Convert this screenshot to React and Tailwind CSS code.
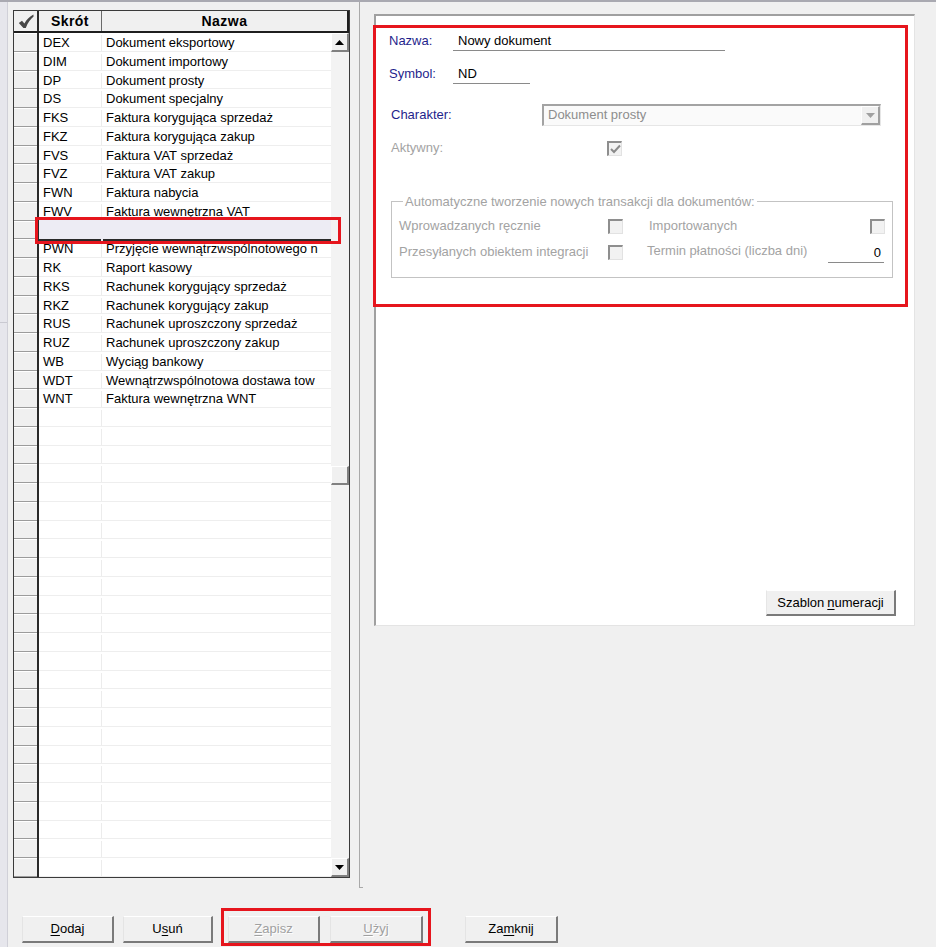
import React from "react";

const docs = [
  ["DEX", "Dokument eksportowy"],
  ["DIM", "Dokument importowy"],
  ["DP", "Dokument prosty"],
  ["DS", "Dokument specjalny"],
  ["FKS", "Faktura korygująca sprzedaż"],
  ["FKZ", "Faktura korygująca zakup"],
  ["FVS", "Faktura VAT sprzedaż"],
  ["FVZ", "Faktura VAT zakup"],
  ["FWN", "Faktura nabycia"],
  ["FWV", "Faktura wewnętrzna VAT"],
  null,
  ["PWN", "Przyjęcie wewnątrzwspólnotowego n"],
  ["RK", "Raport kasowy"],
  ["RKS", "Rachunek korygujący sprzedaż"],
  ["RKZ", "Rachunek korygujący zakup"],
  ["RUS", "Rachunek uproszczony sprzedaż"],
  ["RUZ", "Rachunek uproszczony zakup"],
  ["WB", "Wyciąg bankowy"],
  ["WDT", "Wewnątrzwspólnotowa dostawa tow"],
  ["WNT", "Faktura wewnętrzna WNT"],
];

const TOTAL_ROWS = 45;
const rows = [...docs, ...Array(TOTAL_ROWS - docs.length).fill(undefined)];

function HeaderCheck() {
  return (
    <svg width="16" height="15" viewBox="0 0 16 15">
      <path
        d="M0.8 9 L4 6.8 L6.4 9.6 C8.8 5.4 11.6 2.6 15.4 0.6 L15.6 2.6 C12.4 5.2 9.8 8.8 7.8 14 L5.4 14 Z"
        fill="#474747"
      />
    </svg>
  );
}

function Arrow({ up, color = "#000" }) {
  return (
    <svg width="9" height="5" viewBox="0 0 9 5">
      {up ? (
        <path d="M0 5 L4.5 0 L9 5 Z" fill={color} />
      ) : (
        <path d="M0 0 L9 0 L4.5 5 Z" fill={color} />
      )}
    </svg>
  );
}

function ScrollButton({ up }) {
  return (
    <div className="h-[19px] w-[18px] bg-[#f0f0f0] border-t border-l border-t-white border-l-white border-b-2 border-r-2 border-b-[#808080] border-r-[#808080] flex items-center justify-center">
      <Arrow up={up} />
    </div>
  );
}

function Grid() {
  return (
    <div className="ml-[5px] mt-[8px] w-[337px] h-[868px] border border-[#3a3a3a] flex flex-col bg-white">
      {/* column headers */}
      <div className="flex h-[22px] shrink-0 bg-[#f0f0f0] border-b-2 border-[#1e1e1e]">
        <div className="w-[25px] border-r-2 border-[#2a2a2a] flex items-center justify-center">
          <HeaderCheck />
        </div>
        <div className="w-[63px] border-r border-[#6a6a6a] flex items-center justify-center font-bold text-[14px] tracking-[0.4px]">
          Skrót
        </div>
        <div className="flex-1 border-r-2 border-[#1e1e1e] flex items-center justify-center font-bold text-[14px] tracking-[0.5px]">
          Nazwa
        </div>
      </div>

      {/* body */}
      <div className="flex flex-1 overflow-hidden">
        <div className="w-[25px] shrink-0 border-r-2 border-[#2a2a2a] flex flex-col">
          {rows.map((_, i) => (
            <div
              key={i}
              className="h-[18.75px] shrink-0 bg-[#f0f0f0] border-t border-white border-b border-b-[#9c9c9c]"
            />
          ))}
        </div>
        <div className="flex-1 flex flex-col">
          {rows.map((r, i) =>
            r === null ? (
              <div key={i} className="relative h-[18.75px] shrink-0">
                <div className="absolute left-0 right-0 top-[-3.5px] h-[24px] z-10 flex bg-[#edecf4]">
                  <div className="w-[62px] border-b-2 border-[#2a2a2a]" />
                  <div className="w-[1px]" />
                  <div className="flex-1 ml-[1px] border-b-2 border-[#2a2a2a]" />
                </div>
              </div>
            ) : (
              <div
                key={i}
                className="flex h-[18.75px] shrink-0 border-b border-[#eeeeee] pt-[2px] leading-[16px] overflow-hidden"
              >
                <div className="w-[63px] pl-[4px] border-r border-[#ececec] whitespace-nowrap overflow-hidden">
                  {r ? r[0] : ""}
                </div>
                <div className="flex-1 pl-[4px] whitespace-nowrap overflow-hidden">
                  {r ? r[1] : ""}
                </div>
              </div>
            )
          )}
        </div>
        {/* vertical scrollbar */}
        <div className="w-[18px] shrink-0 bg-[#f3f3f3] flex flex-col">
          <ScrollButton up />
          <div className="h-[414px]" />
          <div className="h-[19px] w-[18px] bg-[#f0f0f0] border-t border-l border-t-white border-l-white border-b-2 border-r-2 border-b-[#808080] border-r-[#808080]" />
          <div className="flex-1" />
          <ScrollButton />
        </div>
      </div>
    </div>
  );
}

function CheckBox({ checked }) {
  return (
    <div className="w-[15px] h-[15px] shrink-0 bg-[#f2f2f2] border-t-2 border-l-2 border-t-[#8e8e8e] border-l-[#8e8e8e] border-b border-r border-b-[#e2e2e2] border-r-[#e2e2e2] flex items-center justify-center">
      {checked && (
        <svg width="11" height="10" viewBox="0 0 11 10">
          <path d="M1 5 L4 8 L10 1.5" fill="none" stroke="#8a8a8a" strokeWidth="2" />
        </svg>
      )}
    </div>
  );
}

function Panel() {
  return (
    <div className="ml-[11px] mt-[12px] w-[541px] h-[612px] bg-white border-t-2 border-l-2 border-t-[#a0a0a0] border-l-[#a0a0a0] border-r border-b border-r-[#e4e4e4] border-b-[#e4e4e4] flex flex-col">
      <div className="pl-[13px] pt-[15px] flex flex-col">
        {/* Nazwa */}
        <div className="flex h-[20px] items-center">
          <div className="w-[64px] text-[#1f1f8c]">Nazwa:</div>
          <div className="w-[272px] h-[19px] pl-[5px] border-b border-[#8a8a8a] leading-[17px]">
            Nowy dokument
          </div>
        </div>
        {/* Symbol */}
        <div className="flex h-[20px] items-center mt-[13px]">
          <div className="w-[64px] text-[#1f1f8c]">Symbol:</div>
          <div className="w-[77px] h-[19px] pl-[5px] border-b border-[#8a8a8a] leading-[17px]">ND</div>
        </div>
        {/* Charakter */}
        <div className="flex h-[22px] items-center mt-[20px] pl-[2px]">
          <div className="w-[151px] text-[#1f1f8c]">Charakter:</div>
          <div className="w-[339px] h-[22px] flex bg-[#fafafa] border-t-2 border-l-2 border-t-[#a3a3a3] border-l-[#a3a3a3] border-b border-r border-b-[#e6e6e6] border-r-[#e6e6e6]">
            <div className="flex-1 pl-[4px] leading-[18px] text-[#8d8d8d]">Dokument prosty</div>
            <div className="w-[19px] h-[19px] bg-[#f0f0f0] border-t border-l border-t-white border-l-white border-b-2 border-r-2 border-b-[#a0a0a0] border-r-[#a0a0a0] flex items-center justify-center">
              <Arrow color="#a0a0a0" />
            </div>
          </div>
        </div>
        {/* Aktywny */}
        <div className="flex h-[20px] items-center mt-[12px] pl-[2px]">
          <div className="w-[216px] text-[#a3a3a3]">Aktywny:</div>
          <CheckBox checked />
        </div>
        {/* group */}
        <fieldset className="mt-[36px] ml-[2px] w-[502px] border border-[#c3c3c3] pl-[7px] pb-[16px]">
          <legend className="ml-[4px] px-[2px] text-[#a3a3a3] leading-[15px]">
            Automatyczne tworzenie nowych transakcji dla dokumentów:
          </legend>
          <div className="flex h-[18px] items-center mt-[8px] text-[#a3a3a3]">
            <div className="w-[209px]">Wprowadzanych ręcznie</div>
            <CheckBox />
            <div className="ml-[26px] w-[221px]">Importowanych</div>
            <CheckBox />
          </div>
          <div className="flex h-[18px] items-center mt-[8px] text-[#a3a3a3]">
            <div className="w-[209px]">Przesyłanych obiektem integracji</div>
            <CheckBox />
            <div className="ml-[24px] w-[181px] -mt-[3px]">Termin płatności (liczba dni)</div>
            <div className="w-[56px] h-[19px] mt-[2px] border-b border-[#8a8a8a] text-right pr-[3px] text-black leading-[17px]">
              0
            </div>
          </div>
        </fieldset>
      </div>
      <div className="mt-auto pb-[9px] pr-[18px] flex justify-end">
        <div className="w-[130px] h-[26px] bg-[#f0f0f0] border-t border-l border-t-white border-l-[#e6e6e6] border-b-2 border-r-2 border-b-[#7a7a7a] border-r-[#7a7a7a] flex items-center justify-center">
          Szablon <span className="underline underline-offset-[2px] ml-[3px]">n</span>umeracji
        </div>
      </div>
    </div>
  );
}

function Button({ className, disabled, children }) {
  return (
    <div
      className={
        "h-[27px] bg-[#f0f0f0] border-t border-l border-t-white border-l-[#e4e4e4] border-b-2 border-r-2 border-b-[#7a7a7a] border-r-[#7a7a7a] flex items-center justify-center " +
        (disabled ? "text-[#a0a0a0] [text-shadow:1px_1px_0_#ffffff] " : "text-black ") +
        className
      }
    >
      {children}
    </div>
  );
}

function U({ children }) {
  return <span className="underline underline-offset-[2px]">{children}</span>;
}

export default function App() {
  return (
    <div className="relative w-[936px] h-[947px] overflow-hidden bg-[#f0f0f0] font-['Liberation_Sans',Arial,sans-serif] text-[13px] text-black">
      <div className="h-[2px] bg-[#a9a9b1]" />
      <div className="flex h-[945px]">
        <div className="w-[8px] shrink-0 bg-[#e6e6ec] border-r border-[#d0d0d8]">
          <div className="h-[321px] border-b border-[#c9c9d1]" />
        </div>
        <div className="flex flex-col flex-1">
          <div className="flex h-[886px]">
            <Grid />
            <div className="ml-[9px] w-[4px] h-[886px] border-l border-b border-[#a9a9a9]" />
            <Panel />
          </div>
          <div className="flex mt-[28px]">
            <Button className="ml-[14px] w-[92px]">
              <U>D</U>odaj
            </Button>
            <Button className="ml-[9px] w-[90px]">
              U<U>s</U>uń
            </Button>
            <Button className="ml-[15px] w-[92px]" disabled>
              <U>Z</U>apisz
            </Button>
            <Button className="ml-[10px] w-[93px]" disabled>
              <U>U</U>żyj
            </Button>
            <Button className="ml-[42px] w-[93px]">
              Za<U>m</U>knij
            </Button>
          </div>
        </div>
      </div>

      {/* highlight frames */}
      <div className="absolute left-[35px] top-[217px] w-[306px] h-[27px] border-[3px] border-[#e6151d] pointer-events-none z-20" />
      <div className="absolute left-[373px] top-[25px] w-[535px] h-[282px] border-[3px] border-[#e6151d] pointer-events-none z-20" />
      <div className="absolute left-[221px] top-[908px] w-[210px] h-[38px] border-[3px] border-[#e6151d] pointer-events-none z-20" />
    </div>
  );
}
